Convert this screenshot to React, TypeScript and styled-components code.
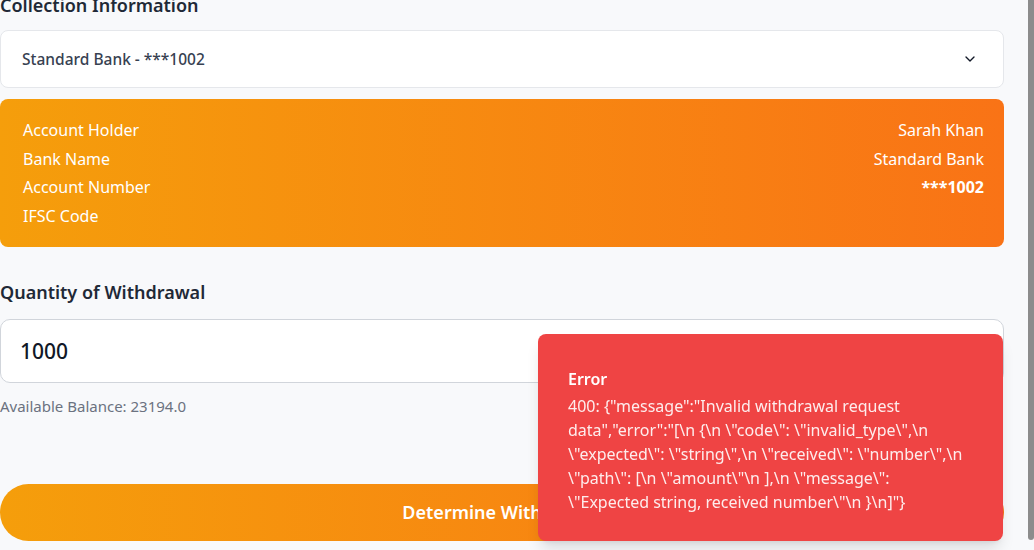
import React, { useLayoutEffect, useRef } from "react"
import styled, { createGlobalStyle } from "styled-components"
import { ChevronDown } from "lucide-react"

const GlobalStyle = createGlobalStyle`
  html, body {
    margin: 0;
    padding: 0;
    overflow: hidden;
  }
  body {
    font-family: "Noto Sans", "Open Sans", sans-serif;
    background: #f8f9fb;
  }
`

const StyledWindow = styled.div`
  display: flex;
  height: 100vh;
  background: #f8f9fb;
`

const StyledPage = styled.div`
  flex: 1;
  min-width: 0;
  overflow-y: auto;
  scrollbar-width: none;

  &::-webkit-scrollbar {
    display: none;
  }
`

// drawn scroll rail, the headless browser hides real scrollbars
const StyledScrollRail = styled.div`
  display: flex;
  flex-direction: column;
  width: 6px;
  flex-shrink: 0;
`

const StyledScrollThumb = styled.div`
  height: 540px;
  background: #8c8c8c;
  border-radius: 0 0 3px 3px;
`

const StyledForm = styled.div`
  display: flex;
  flex-direction: column;
  padding: 24px 24px 9px 0;
`

const StyledHeading = styled.h2`
  margin: 0 0 13px;
  font-size: 18px;
  line-height: 24px;
  font-weight: 600;
  color: #1f2937;
`

const StyledSelect = styled.div`
  display: flex;
  align-items: center;
  justify-content: space-between;
  height: 58px;
  box-sizing: border-box;
  padding: 0 25px 0 21px;
  margin-bottom: 11px;
  background: white;
  border: 1px solid #e5e7eb;
  border-radius: 8px;
  font-size: 15.5px;
  font-weight: 500;
  color: #374151;
`

const StyledBankCard = styled.div`
  display: flex;
  flex-direction: column;
  gap: 4.5px;
  padding: 19px 20px 19px 23px;
  border-radius: 8px;
  background: linear-gradient(to right, #f59e0b, #f97316);
  color: white;
  font-size: 16px;
`

const StyledBankRow = styled.div`
  display: flex;
  justify-content: space-between;
  line-height: 24px;
  min-height: 24px;
`

const StyledBankValue = styled.span<{ bold?: boolean }>`
  font-weight: ${({ bold }) => (bold ? 700 : 400)};
`

const StyledLabel = styled.label`
  margin: 33px 0 15px;
  font-size: 18px;
  line-height: 24px;
  font-weight: 600;
  color: #1f2937;
`

const StyledInput = styled.input`
  height: 64px;
  box-sizing: border-box;
  padding: 0 19px;
  border: 1px solid #d1d5db;
  border-radius: 10px;
  background: white;
  font-family: inherit;
  font-size: 21px;
  font-weight: 500;
  color: #111827;
  outline: none;
`

const StyledHint = styled.div`
  margin-top: 12px;
  font-size: 15px;
  line-height: 22px;
  color: #6b7280;
`

const StyledSubmit = styled.button`
  margin-top: 67px;
  height: 57px;
  border: none;
  border-radius: 999px;
  background: linear-gradient(to right, #f59e0b, #f97316);
  color: white;
  font-family: inherit;
  font-size: 18px;
  font-weight: 600;
  cursor: pointer;
`

const StyledToast = styled.div`
  position: fixed;
  right: 31px;
  bottom: 9px;
  width: 465px;
  box-sizing: border-box;
  padding: 33px 36px 27px 30px;
  border-radius: 8px;
  background: #ef4444;
  color: white;
  box-shadow: 0 10px 15px -3px rgba(0, 0, 0, 0.12), 0 4px 6px -4px rgba(0, 0, 0, 0.1);
`

const StyledToastTitle = styled.div`
  font-size: 16px;
  line-height: 24px;
  font-weight: 600;
  margin-bottom: 3px;
`

const StyledToastBody = styled.div`
  font-size: 16px;
  line-height: 24px;
  opacity: 0.9;
  word-break: break-word;
`

const bankRows = [
  { label: "Account Holder", value: "Sarah Khan" },
  { label: "Bank Name", value: "Standard Bank" },
  { label: "Account Number", value: "***1002", bold: true },
  { label: "IFSC Code", value: "" },
]

const errorText =
  '400: {"message":"Invalid withdrawal request data","error":"[\\n {\\n \\"code\\": \\"invalid_type\\",\\n \\"expected\\": \\"string\\",\\n \\"received\\": \\"number\\",\\n \\"path\\": [\\n \\"amount\\"\\n ],\\n \\"message\\": \\"Expected string, received number\\"\\n }\\n]"}'

export default function App() {
  const pageRef = useRef<HTMLDivElement>(null)

  useLayoutEffect(() => {
    const el = pageRef.current
    if (el) el.scrollTop = el.scrollHeight
  }, [])

  return (
    <>
      <GlobalStyle />
      <StyledWindow>
        <StyledPage ref={pageRef}>
          <StyledForm>
            <StyledHeading>Collection Information</StyledHeading>
            <StyledSelect>
              <span>Standard Bank - ***1002</span>
              <ChevronDown size={16} color="#111827" strokeWidth={2} />
            </StyledSelect>
            <StyledBankCard>
              {bankRows.map((row) => (
                <StyledBankRow key={row.label}>
                  <span>{row.label}</span>
                  <StyledBankValue bold={row.bold}>{row.value}</StyledBankValue>
                </StyledBankRow>
              ))}
            </StyledBankCard>
            <StyledLabel>Quantity of Withdrawal</StyledLabel>
            <StyledInput defaultValue="1000" />
            <StyledHint>Available Balance: 23194.0</StyledHint>
            <StyledSubmit>Determine Withdrawal</StyledSubmit>
          </StyledForm>
        </StyledPage>
        <StyledScrollRail>
          <StyledScrollThumb />
        </StyledScrollRail>
      </StyledWindow>
      <StyledToast>
        <StyledToastTitle>Error</StyledToastTitle>
        <StyledToastBody>{errorText}</StyledToastBody>
      </StyledToast>
    </>
  )
}
